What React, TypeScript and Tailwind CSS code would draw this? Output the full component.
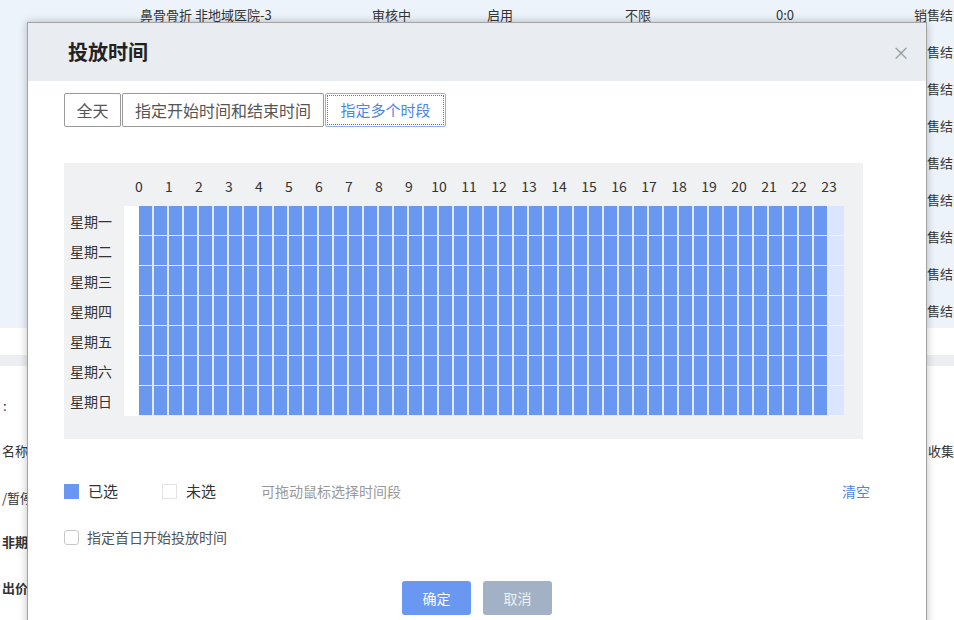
const font = { fontFamily: '"Noto Sans CJK SC", "Noto Sans", sans-serif' };

const days = ['星期一', '星期二', '星期三', '星期四', '星期五', '星期六', '星期日'];
const hours = Array.from({ length: 24 }, (_, i) => i);
const slots = Array.from({ length: 48 }, (_, i) => i);
const bgRows = [52, 89, 126, 163, 200, 237, 274, 311];

function Background() {
  return (
    <div className="absolute inset-0">
      <div className="h-[328px] bg-[#edf3fb] relative">
        <div className="flex items-center h-[30px] text-[13px] text-[#333]">
          <span className="ml-[140px] w-[232px]">鼻骨骨折 非地域医院-3</span>
          <span className="w-[115px]">审核中</span>
          <span className="w-[138px]">启用</span>
          <span className="w-[151px]">不限</span>
          <span className="w-[138px]">0:0</span>
          <span className="whitespace-nowrap">销售结</span>
        </div>
        {bgRows.map((y) => (
          <span key={y} className="absolute left-[914px] text-[13px] text-[#333] whitespace-nowrap -translate-y-1/2" style={{ top: y }}>
            销售结
          </span>
        ))}
      </div>
      <div className="mt-[27px] h-[11px] bg-[#eceef1]" />
      <div className="text-[13px] text-[#333]">
        <div className="absolute left-[3px] top-[396px]">:</div>
        <div className="absolute left-[2px] top-[441px]">名称</div>
        <div className="absolute left-[928px] top-[441px]">收集</div>
        <div className="absolute left-[2px] top-[488px]">/暂停</div>
        <div className="absolute left-[2px] top-[532px] font-bold">非期</div>
        <div className="absolute left-[2px] top-[578px] font-bold">出价</div>
      </div>
    </div>
  );
}

function TimeGrid() {
  return (
    <div className="w-[799px] h-[276px] bg-[#f0f1f3] pt-[12px]">
      <div className="flex h-[22px] items-center">
        <div className="w-[60px]" />
        {hours.map((h) => (
          <div key={h} className="w-[30px] text-center text-[14px] text-[#333]">{h}</div>
        ))}
      </div>
      <div className="flex mt-[9px]">
        <div className="w-[60px] flex flex-col">
          {days.map((d) => (
            <div key={d} className="h-[30px] flex items-center pl-[6px] text-[14px] text-[#333]">{d}</div>
          ))}
        </div>
        <div className="bg-white">
          {days.map((d) => (
            <div key={d} className="flex">
              {slots.map((s) => (
                <div
                  key={s}
                  className={
                    s === 0
                      ? 'w-[15px] h-[30px] bg-white'
                      : s === 47
                        ? 'w-[15px] h-[30px] bg-[#d9e6fd] border-b border-[#eef3fd]'
                        : 'w-[15px] h-[30px] bg-[#6a97f2] border-r-2 border-b border-[#e3ebfa]'
                  }
                />
              ))}
            </div>
          ))}
        </div>
      </div>
    </div>
  );
}

function Modal() {
  return (
    <div className="absolute left-[27px] top-[22px] w-[900px] h-[620px] bg-white border border-[#a3a3a3] shadow-[0_0_8px_rgba(0,0,0,0.25)]">
      <div className="h-[58px] bg-[#e9ecf0] flex items-center justify-between pl-[40px] pr-[16px]">
        <h3 className="text-[20px] font-bold text-[#222]">投放时间</h3>
        <span className="text-[18px] text-[#999] leading-none">×</span>
      </div>
      <div className="px-[36px]">
        <div className="flex gap-px mt-[12px] text-[16px]">
          <button className="h-[34px] w-[57px] border border-[#999] rounded-[2px] bg-white text-[#555]">全天</button>
          <button className="h-[34px] w-[202px] border border-[#999] rounded-[2px] bg-white text-[#555]">指定开始时间和结束时间</button>
          <button className="h-[34px] w-[121px] border border-[#8fb2ee] rounded-[2px] bg-white text-[#4a86e8] text-[15px] outline-1 outline-dotted outline-[#777] -outline-offset-3">指定多个时段</button>
        </div>
        <div className="mt-[36px]">
          <TimeGrid />
        </div>
        <div className="flex items-center h-[20px] mt-[42px] w-[806px] text-[15px]">
          <span className="w-[15px] h-[15px] bg-[#6a97f2]" />
          <span className="ml-[9px] text-[#333]">已选</span>
          <span className="ml-[44px] w-[15px] h-[15px] bg-white border border-[#e3e3e3]" />
          <span className="ml-[9px] text-[#333]">未选</span>
          <span className="ml-[45px] text-[14px] text-[#999]">可拖动鼠标选择时间段</span>
          <span className="ml-auto text-[14px] text-[#4a86e8]">清空</span>
        </div>
        <label className="flex items-center h-[20px] mt-[26px] gap-[8px]">
          <span className="w-[15px] h-[15px] rounded-[3px] border border-[#c8c8c8] bg-white" />
          <span className="text-[14px] text-[#555]">指定首日开始投放时间</span>
        </label>
        <div className="flex justify-center gap-[12px] mt-[34px]">
          <button className="w-[69px] h-[34px] rounded-[3px] bg-[#6a97f2] text-white text-[14px]">确定</button>
          <button className="w-[69px] h-[34px] rounded-[3px] bg-[#a2b1c6] text-[#edf1f6] text-[14px]">取消</button>
        </div>
      </div>
    </div>
  );
}

export default function App() {
  return (
    <div className="relative w-[954px] h-[620px] overflow-hidden bg-white" style={font}>
      <Background />
      <Modal />
    </div>
  );
}
